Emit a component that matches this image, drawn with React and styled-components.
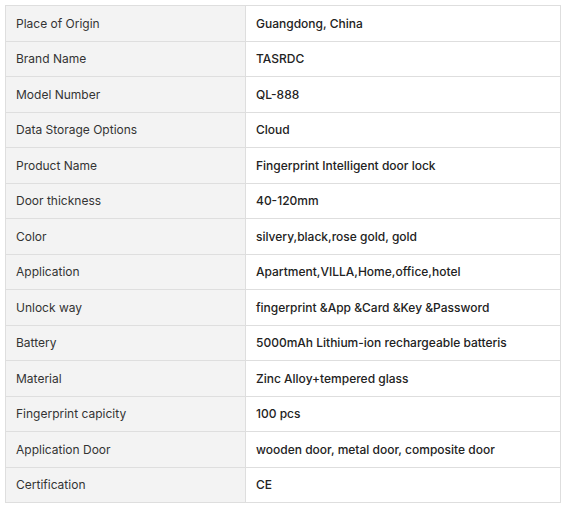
import React from "react";
import styled, { createGlobalStyle } from "styled-components";

const specs = [
    ["Place of Origin", "Guangdong, China"],
    ["Brand Name", "TASRDC"],
    ["Model Number", "QL-888"],
    ["Data Storage Options", "Cloud"],
    ["Product Name", "Fingerprint Intelligent door lock"],
    ["Door thickness", "40-120mm"],
    ["Color", "silvery,black,rose gold, gold"],
    ["Application", "Apartment,VILLA,Home,office,hotel"],
    ["Unlock way", "fingerprint &App &Card &Key &Password"],
    ["Battery", "5000mAh Lithium-ion rechargeable batteris"],
    ["Material", "Zinc Alloy+tempered glass"],
    ["Fingerprint capicity", "100 pcs"],
    ["Application Door", "wooden door, metal door, composite door"],
    ["Certification", "CE"]
];

const App = () => {
    return (
        <>
            <GlobalStyle />
            <Wrapper>
                <SpecTable>
                    <tbody>
                        {specs.map(([label, value]) => (
                            <Row key={label}>
                                <LabelCell>{label}</LabelCell>
                                <ValueCell>{value}</ValueCell>
                            </Row>
                        ))}
                    </tbody>
                </SpecTable>
            </Wrapper>
        </>
    );
};

const GlobalStyle = createGlobalStyle`
    body {
        margin: 0;
        background: #fff;
        font-family: Inter, "Noto Sans", sans-serif;
    }
`;

const Wrapper = styled.div`
    padding: 5px 4px 0 5px;
`;

const SpecTable = styled.table`
    width: 556px;
    border-collapse: collapse;
    table-layout: fixed;
    font-size: 12px;
    color: #333;
`;

const Row = styled.tr`
    height: 35.5px;
`;

const Cell = styled.td`
    border: 1px solid #dedede;
    padding: 0 10px;
    vertical-align: middle;
    white-space: nowrap;
`;

const LabelCell = styled(Cell)`
    width: 240px;
    box-sizing: border-box;
    background: #f3f3f3;
    color: #333;
`;

const ValueCell = styled(Cell)`
    background: #fff;
    font-weight: 500;
    color: #222;
`;

export default App;
